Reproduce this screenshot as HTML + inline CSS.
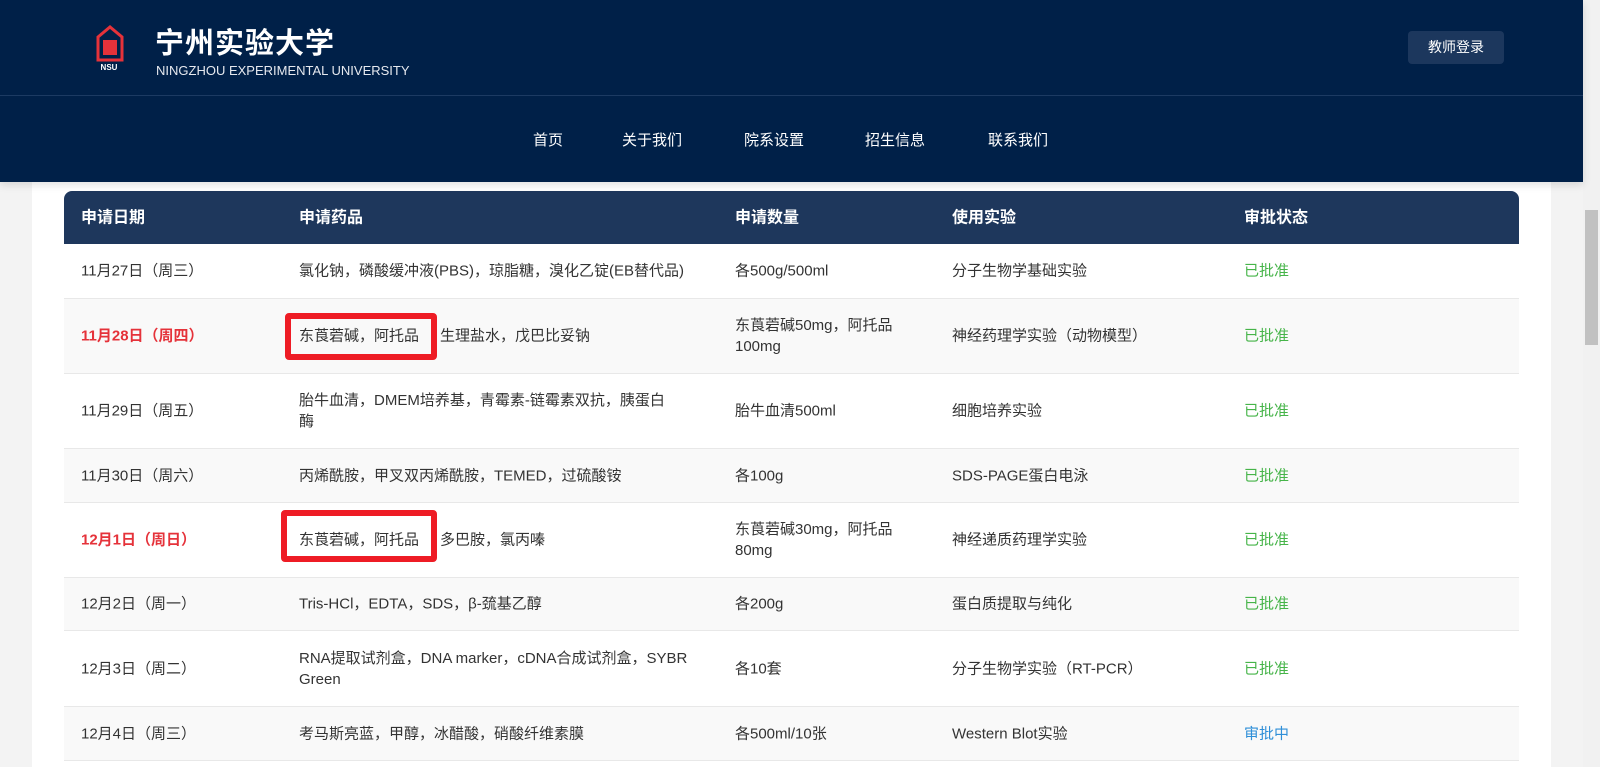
<!DOCTYPE html>
<html><head><meta charset="utf-8"><style>
*{margin:0;padding:0;box-sizing:border-box}
body{width:1600px;height:767px;overflow:hidden;background:#fff;font-family:"Liberation Sans","Noto Sans CJK SC",sans-serif;position:relative;color:#333}
.side{position:absolute;top:0;height:767px;background:#f3f3f3}
.hdr{position:absolute;left:0;top:0;width:1583px;height:182px;background:#002048;box-shadow:0 3px 8px rgba(0,0,0,.12);z-index:2}
.line{position:absolute;left:0;top:95px;width:1583px;height:1px;background:#1c3a62}
.title{position:absolute;left:155px;top:20px;color:#fff;font-size:29px;font-weight:bold;letter-spacing:1px}
.sub{position:absolute;left:156px;top:63px;color:#e6e9ef;font-size:13px}
.btn{position:absolute;left:1408px;top:31px;width:96px;height:33px;background:#1c375d;border-radius:4px;color:#fff;font-size:14px;line-height:33px;text-align:center}
.nav{position:absolute;top:129px;color:#fff;font-size:15px}
.tbl{position:absolute;left:64px;top:191px;width:1455px;font-size:15px}
.row{position:relative;border-bottom:1px solid #e8e8e8}
.row.h{background:#1e375c;color:#fff;font-weight:bold;height:53px;border-radius:8px 8px 0 0;border:0}
.c{position:absolute;top:50%;transform:translateY(-50%);line-height:21px;white-space:nowrap}
.c1{left:17px}.c2{left:235px}.c3{left:671px}.c4{left:888px}.c5{left:1180px}
.red{color:#e5323a;font-weight:bold}
.ok{color:#46b449}.ing{color:#2f8fd8}
.sp{display:inline-block;width:21px}
.box{position:absolute;border:6px solid #ee1c25;border-radius:4px;z-index:3}
</style></head><body>
<div class="side" style="left:0;width:32px"></div>
<div class="side" style="left:1551px;width:32px"></div>
<div class="side" style="left:1583px;width:17px;background:#f1f1f1"></div>
<div style="position:absolute;left:1585px;top:210px;width:13px;height:135px;background:#c1c1c1"></div>
<div class="hdr">
<svg style="position:absolute;left:95px;top:24px" width="30" height="48" viewBox="0 0 30 48"><path d="M3 13 L15 3 L27 13 V36 H3 Z" fill="none" stroke="#e5323a" stroke-width="3"/><rect x="8" y="16" width="14" height="15" fill="#e5323a"/><text x="14" y="46" font-size="8" font-weight="bold" fill="#fff" text-anchor="middle" font-family="Liberation Sans">NSU</text></svg>
<div class="title">宁州实验大学</div>
<div class="sub">NINGZHOU EXPERIMENTAL UNIVERSITY</div>
<div class="btn">教师登录</div>
<div class="line"></div>
<div class="nav" style="left:533px">首页</div>
<div class="nav" style="left:622px">关于我们</div>
<div class="nav" style="left:744px">院系设置</div>
<div class="nav" style="left:865px">招生信息</div>
<div class="nav" style="left:988px">联系我们</div>
</div>
<div class="tbl">
<div class="row h" style="font-size:16px"><div class="c c1">申请日期</div><div class="c c2">申请药品</div><div class="c c3">申请数量</div><div class="c c4">使用实验</div><div class="c c5">审批状态</div></div>
<div class="row" style="height:55px;background:#fff"><div class="c c1">11月27日（周三）</div><div class="c c2">氯化钠，磷酸缓冲液(PBS)，琼脂糖，溴化乙锭(EB替代品)</div><div class="c c3">各500g/500ml</div><div class="c c4">分子生物学基础实验</div><div class="c c5 ok">已批准</div></div>
<div class="row" style="height:75px;background:#f9f9f9"><div class="c c1 red">11月28日（周四）</div><div class="c c2">东莨菪碱，阿托品<span class="sp"></span>生理盐水，戊巴比妥钠</div><div class="c c3">东莨菪碱50mg，阿托品<br>100mg</div><div class="c c4">神经药理学实验（动物模型）</div><div class="c c5 ok">已批准</div></div>
<div class="row" style="height:75px;background:#fff"><div class="c c1">11月29日（周五）</div><div class="c c2">胎牛血清，DMEM培养基，青霉素-链霉素双抗，胰蛋白<br>酶</div><div class="c c3">胎牛血清500ml</div><div class="c c4">细胞培养实验</div><div class="c c5 ok">已批准</div></div>
<div class="row" style="height:54px;background:#f9f9f9"><div class="c c1">11月30日（周六）</div><div class="c c2">丙烯酰胺，甲叉双丙烯酰胺，TEMED，过硫酸铵</div><div class="c c3">各100g</div><div class="c c4">SDS-PAGE蛋白电泳</div><div class="c c5 ok">已批准</div></div>
<div class="row" style="height:75px;background:#fff"><div class="c c1 red">12月1日（周日）</div><div class="c c2">东莨菪碱，阿托品<span class="sp"></span>多巴胺，氯丙嗪</div><div class="c c3">东莨菪碱30mg，阿托品<br>80mg</div><div class="c c4">神经递质药理学实验</div><div class="c c5 ok">已批准</div></div>
<div class="row" style="height:53px;background:#f9f9f9"><div class="c c1">12月2日（周一）</div><div class="c c2">Tris-HCl，EDTA，SDS，β-巯基乙醇</div><div class="c c3">各200g</div><div class="c c4">蛋白质提取与纯化</div><div class="c c5 ok">已批准</div></div>
<div class="row" style="height:76px;background:#fff"><div class="c c1">12月3日（周二）</div><div class="c c2">RNA提取试剂盒，DNA marker，cDNA合成试剂盒，SYBR<br>Green</div><div class="c c3">各10套</div><div class="c c4">分子生物学实验（RT-PCR）</div><div class="c c5 ok">已批准</div></div>
<div class="row" style="height:54px;background:#f9f9f9"><div class="c c1">12月4日（周三）</div><div class="c c2">考马斯亮蓝，甲醇，冰醋酸，硝酸纤维素膜</div><div class="c c3">各500ml/10张</div><div class="c c4">Western Blot实验</div><div class="c c5 ing">审批中</div></div>
</div>
<div class="box" style="left:285px;top:313px;width:152px;height:47px"></div>
<div class="box" style="left:281px;top:510px;width:156px;height:52px"></div>
</body></html>
